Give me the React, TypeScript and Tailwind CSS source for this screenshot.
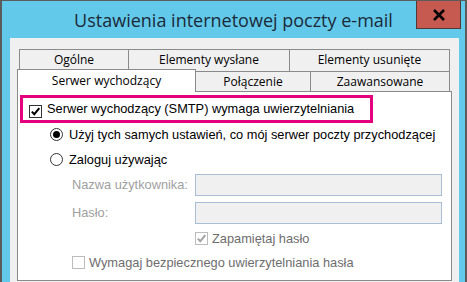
import React from 'react'

const body = "font-['Liberation_Sans',Arial,sans-serif] text-[12.8px]"
const tabFont = "font-['Open_Sans',sans-serif] text-[12px]"

function CheckBox({ checked, disabled }: { checked?: boolean; disabled?: boolean }) {
  return (
    <div
      className={
        'w-[13px] h-[13px] shrink-0 border bg-white flex items-center justify-center ' +
        (disabled ? 'border-[#bcbcbc]' : 'border-[#333333]')
      }
    >
      {checked && (
        <svg width="11" height="11" viewBox="0 0 11 11">
          <path
            d="M1.8 5.6 L4.3 8.2 L9.3 2.2"
            fill="none"
            stroke={disabled ? '#a3a3a3' : '#000000'}
            strokeWidth="2"
          />
        </svg>
      )}
    </div>
  )
}

function Radio({ checked }: { checked?: boolean }) {
  return (
    <div className="w-[13px] h-[13px] shrink-0 rounded-full border border-[#333333] bg-white flex items-center justify-center">
      {checked && <div className="w-[7px] h-[7px] rounded-full bg-black" />}
    </div>
  )
}

export default function App() {
  return (
    <div className="w-[467px] h-[282px] overflow-hidden bg-[#63c9ea] border-l-2 border-r-2 border-t border-[#5b5b5b] flex flex-col">
      {/* Title bar */}
      <div className="relative h-[37px] shrink-0 flex items-center justify-center">
        <span className="font-['Open_Sans',sans-serif] text-[18px] text-[#1b2a38] mt-[2px]">
          Ustawienia internetowej poczty e-mail
        </span>
        <div className="absolute right-[4px] top-[-1px] w-[45px] h-[29px] bg-[#c75a50] border border-[#4f3a38] flex items-center justify-center">
          <svg width="14" height="12" viewBox="0 0 14 12">
            <path d="M2 1 L12 11 M12 1 L2 11" stroke="#000" strokeWidth="2.6" />
          </svg>
        </div>
      </div>

      {/* Client area */}
      <div className="flex-1 ml-[8px] mr-[6px] bg-[#f0f0f0] pt-[11px] pl-[7px]">
        {/* Tabs row 1 */}
        <div className={'flex h-[22px] ml-[2px] text-black ' + tabFont}>
          <div className="w-[109px] border-t border-l border-[#8a8a8a] bg-[#f0f0f0] flex justify-center pt-[1px]">Ogólne</div>
          <div className="w-[161px] border-t border-l border-[#8a8a8a] bg-[#f0f0f0] flex justify-center pt-[1px]">Elementy wysłane</div>
          <div className="w-[161px] border-t border-l border-r border-[#8a8a8a] bg-[#f0f0f0] flex justify-center pt-[1px]">Elementy usunięte</div>
        </div>
        {/* Tabs row 2 */}
        <div className={'flex h-[22px] -mt-[2px] text-black ' + tabFont}>
          <div className="relative z-10 w-[179px] h-[23px] border-t border-l border-r border-[#8a8a8a] bg-white flex justify-center pt-[2px]">
            Serwer wychodzący
          </div>
          <div className="mt-[2px] w-[115px] h-[20px] border-t border-r border-[#8a8a8a] bg-[#f0f0f0] flex justify-center pt-[1px]">
            Połączenie
          </div>
          <div className="mt-[2px] w-[139px] h-[20px] border-t border-r border-[#8a8a8a] bg-[#f0f0f0] flex justify-center pt-[1px]">
            Zaawansowane
          </div>
        </div>

        {/* Panel */}
        <div className={'w-[435px] h-[190px] border border-[#8a8a8a] bg-white whitespace-nowrap ' + body}>
          <div className="ml-[2px] mt-[3px] w-[353px] h-[28px] border-[3px] border-[#e4007c] flex items-center pl-[6px] gap-[5px]">
            <div className="mt-[4px]">
              <CheckBox checked />
            </div>
            <span className="text-black">Serwer wychodzący (SMTP) wymaga uwierzytelniania</span>
          </div>

          <div className="ml-[32px] mt-[3px] h-[17px] flex items-center gap-[6px]">
            <Radio checked />
            <span className="text-black">Użyj tych samych ustawień, co mój serwer poczty przychodzącej</span>
          </div>
          <div className="ml-[32px] mt-[8px] h-[17px] flex items-center gap-[6px]">
            <Radio />
            <span className="text-black">Zaloguj używając</span>
          </div>

          <div className="ml-[54px] mt-[6px] grid grid-cols-[123px_247px] gap-y-[6px] items-center">
            <span className="text-[#a0a0a0]">Nazwa użytkownika:</span>
            <div className="h-[22px] border border-[#a9bdd4] bg-[#f0f0f0]" />
            <span className="text-[#a0a0a0]">Hasło:</span>
            <div className="h-[22px] border border-[#a9bdd4] bg-[#f0f0f0]" />
          </div>

          <div className="ml-[177px] mt-[6px] h-[17px] flex items-center gap-[4px]">
            <CheckBox checked disabled />
            <span className="text-[#6d6d6d]">Zapamiętaj hasło</span>
          </div>
          <div className="ml-[54px] mt-[7px] h-[17px] flex items-center gap-[4px]">
            <CheckBox disabled />
            <span className="text-[#6d6d6d]">Wymagaj bezpiecznego uwierzytelniania hasła</span>
          </div>
        </div>
      </div>
    </div>
  )
}
